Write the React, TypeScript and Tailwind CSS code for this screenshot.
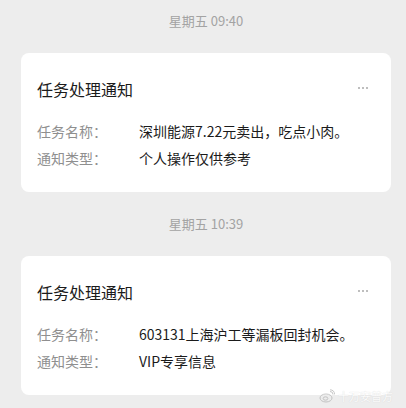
import React from 'react';

type Notice = {
  time: string;
  title: string;
  name: string;
  kind: string;
};

const NOTICES: Notice[] = [
  { time: '星期五 09:40', title: '任务处理通知', name: '深圳能源7.22元卖出，吃点小肉。', kind: '个人操作仅供参考' },
  { time: '星期五 10:39', title: '任务处理通知', name: '603131上海沪工等漏板回封机会。', kind: 'VIP专享信息' },
];

const FONT = { fontFamily: '"Noto Sans CJK SC", "Noto Sans", sans-serif' };

const NoticeCard: React.FC<{ notice: Notice }> = ({ notice }) => (
  <div className="h-[139px] rounded-lg bg-white pl-4 pr-[23px] pt-[24px]">
    <div className="flex items-center justify-between">
      <h3 className="text-[16px] leading-[24px] text-[#1b1b1b]">{notice.title}</h3>
      {/* more dots */}
      <div className="flex gap-[2px] -mt-[3px]">
        <span className="h-[2px] w-[2px] rounded-full bg-[#a8a8a8]" />
        <span className="h-[2px] w-[2px] rounded-full bg-[#a8a8a8]" />
        <span className="h-[2px] w-[2px] rounded-full bg-[#a8a8a8]" />
      </div>
    </div>
    <div className="mt-[17px] text-[14px] leading-[27px]">
      <div className="flex">
        <span className="w-[102px] shrink-0 text-[#8f8f8f]">任务名称：</span>
        <span className="text-[#1b1b1b] whitespace-nowrap">{notice.name}</span>
      </div>
      <div className="flex">
        <span className="w-[102px] shrink-0 text-[#8f8f8f]">通知类型：</span>
        <span className="text-[#1b1b1b]">{notice.kind}</span>
      </div>
    </div>
  </div>
);

export default function App() {
  return (
    <div className="relative h-[408px] w-[406px] overflow-hidden bg-[#ededed] pl-[21px] pr-[15px] pt-[10px]" style={FONT}>
      {NOTICES.map((n, i) => (
        <div key={i} className={i > 0 ? 'mt-[21px]' : ''}>
          <div className="mb-[21px] h-[22px] text-center text-[13px] leading-[22px] text-[#a3a3a3]">{n.time}</div>
          <NoticeCard notice={n} />
        </div>
      ))}

      {/* watermark */}
      <div className="absolute bottom-[5px] right-[13px] flex items-center gap-[3px] opacity-80">
        <svg width="16" height="14" viewBox="0 0 16 14" fill="none" stroke="#b9b9b9" strokeWidth="1">
          <ellipse cx="7" cy="9" rx="6" ry="4" />
          <ellipse cx="6.5" cy="9.5" rx="2.3" ry="1.7" />
          <path d="M11 2.5 a3 3 0 0 1 3 3" />
          <path d="M11 0.8 a4.8 4.8 0 0 1 4.6 4.6" />
        </svg>
        <span className="text-[11px] leading-[14px] text-white [text-shadow:0_0_1px_#c8c8c8]">十万安普方</span>
      </div>
    </div>
  );
}
